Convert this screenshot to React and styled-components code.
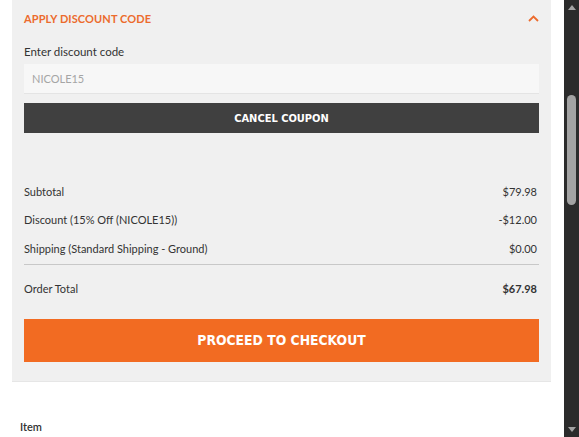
import React from 'react';
import styled, { createGlobalStyle } from 'styled-components';

const GlobalStyle = createGlobalStyle`
  html, body { margin: 0; padding: 0; background: #fff; overflow: hidden; }
  body { font-family: Lato, "Open Sans", sans-serif; color: #333; }
`;

const Screen = styled.div`
  display: flex;
  width: 579px;
  height: 437px;
  overflow: hidden;
`;

const Page = styled.div`
  flex: 1;
  padding: 0 13px 0 12px;
`;

const Panel = styled.div`
  background: #f0f0f0;
  padding: 0 12px 19px;
  border-bottom: 1px solid #e6e6e6;
`;

const Header = styled.div`
  display: flex;
  align-items: center;
  justify-content: space-between;
  height: 37px;
  color: #ec6b2d;
  font-size: 11px;
  font-weight: 700;
  letter-spacing: 0.1px;
`;

const Label = styled.div`
  font-size: 11.5px;
  color: #333;
  margin: 8px 0 6px;
`;

const Input = styled.input`
  display: block;
  box-sizing: border-box;
  width: 100%;
  height: 30px;
  border: none;
  border-bottom: 1px solid #e4e4e4;
  background: #f7f7f7;
  padding: 0 8px;
  font-family: Lato, sans-serif;
  font-size: 11px;
  color: #999;
  &::placeholder { color: #a5a5a5; }
`;

const Button = styled.button`
  display: block;
  width: 100%;
  border: none;
  padding: 0;
  color: #fff;
  font-family: "DejaVu Sans Condensed", "Liberation Sans Narrow", sans-serif;
  font-weight: 700;
  text-transform: uppercase;
  background: ${p => (p.$primary ? '#f26b22' : '#404040')};
  height: ${p => (p.$primary ? '43px' : '30px')};
  font-size: ${p => (p.$primary ? '13.8px' : '11px')};
  margin-top: ${p => (p.$primary ? '6px' : '9px')};
`;

const Totals = styled.div`
  margin-top: 44px;
`;

const Row = styled.div`
  display: flex;
  justify-content: space-between;
  align-items: center;
  height: ${p => (p.$total ? '48px' : '28.5px')};
  padding-right: 2px;
  font-size: 11px;
  color: #333;
  border-top: ${p => (p.$total ? '1px solid #c8c8c8' : 'none')};
  margin-top: ${p => (p.$total ? '1px' : '0')};
`;

const Value = styled.span`
  font-weight: ${p => (p.$bold ? 700 : 400)};
`;

const ItemHead = styled.div`
  padding: 38px 0 0 8px;
  font-size: 11px;
  font-weight: 600;
  color: #333;
`;

const Scrollbar = styled.div`
  width: 15px;
  height: 100%;
  background: #2b2b2b;
  display: flex;
  flex-direction: column;
  align-items: center;
`;

const Arrow = styled.div`
  height: 15px;
  display: flex;
  align-items: center;
  justify-content: center;
`;

const Track = styled.div`
  flex: 1;
  width: 100%;
  display: flex;
  justify-content: center;
`;

const Thumb = styled.div`
  width: 9px;
  height: 110px;
  margin-top: 80px;
  border-radius: 5px;
  background: #a3a3a3;
`;

const Chevron = () => (
  <svg width="11" height="7" viewBox="0 0 11 7">
    <path d="M1 6 L5.5 1.5 L10 6" fill="none" stroke="#ec6b2d" strokeWidth="1.8" />
  </svg>
);

const Tri = ({ down }) => (
  <svg width="8" height="5" viewBox="0 0 8 5">
    <path d={down ? 'M0 0 L8 0 L4 5 Z' : 'M0 5 L8 5 L4 0 Z'} fill="#a3a3a3" />
  </svg>
);

const rows = [
  ['Subtotal', '$79.98'],
  ['Discount (15% Off (NICOLE15))', '-$12.00'],
  ['Shipping (Standard Shipping - Ground)', '$0.00'],
];

export default function App() {
  return (
    <Screen>
      <GlobalStyle />
      <Page>
        <Panel>
          <Header>
            <span>APPLY DISCOUNT CODE</span>
            <Chevron />
          </Header>
          <Label>Enter discount code</Label>
          <Input placeholder="NICOLE15" />
          <Button>Cancel Coupon</Button>
          <Totals>
            {rows.map(([k, v]) => (
              <Row key={k}>
                <span>{k}</span>
                <Value>{v}</Value>
              </Row>
            ))}
            <Row $total>
              <span>Order Total</span>
              <Value $bold>$67.98</Value>
            </Row>
          </Totals>
          <Button $primary>Proceed to Checkout</Button>
        </Panel>
        <ItemHead>Item</ItemHead>
      </Page>
      <Scrollbar>
        <Arrow><Tri /></Arrow>
        <Track><Thumb /></Track>
        <Arrow><Tri down /></Arrow>
      </Scrollbar>
    </Screen>
  );
}
